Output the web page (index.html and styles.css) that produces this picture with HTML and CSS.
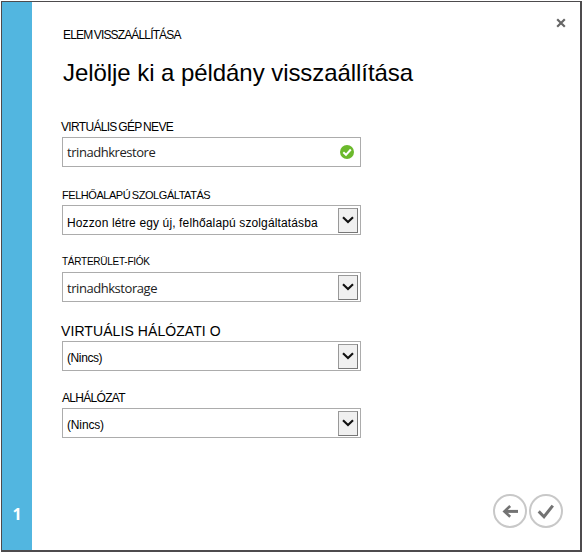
FILE: index.html
```
<!DOCTYPE html>
<html lang="hu">
<head>
<meta charset="utf-8">
<title>Elem visszaállítása</title>
<link rel="stylesheet" href="styles.css">
</head>
<body>
<div class="dialog">
  <aside class="steps"><span class="step">1</span></aside>
  <main class="content">
    <header class="top">
      <div class="eyebrow">ELEM VISSZAÁLLÍTÁSA</div>
      <svg class="close" width="10" height="10" viewBox="0 0 10 10"><path d="M1.2 1.3 8.8 8.7M8.8 1.3 1.2 8.7"/></svg>
    </header>
    <h1 class="title">Jelölje ki a példány visszaállítása</h1>
    <form class="form">
      <div class="field name">
        <label class="label"><span>VIRTUÁLIS GÉP NEVE</span></label>
        <div class="box"><span class="value native">trinadhkrestore</span>
          <svg class="valid" width="14" height="14" viewBox="0 0 14 14"><circle cx="7" cy="7" r="7"/><path d="M3.3 7.2 6 9.8 10.8 4.5"/></svg>
        </div>
      </div>
      <div class="field service">
        <label class="label"><span>FELHŐALAPÚ SZOLGÁLTATÁS</span></label>
        <div class="box"><span class="value">Hozzon létre egy új, felhőalapú szolgáltatásba</span>
          <span class="drop"><svg width="12" height="8" viewBox="0 0 12 8"><path d="M1 1.2 6 6 11 1.2"/></svg></span>
        </div>
      </div>
      <div class="field storage">
        <label class="label"><span>TÁRTERÜLET-FIÓK</span></label>
        <div class="box"><span class="value native">trinadhkstorage</span>
          <span class="drop"><svg width="12" height="8" viewBox="0 0 12 8"><path d="M1 1.2 6 6 11 1.2"/></svg></span>
        </div>
      </div>
      <div class="field network">
        <label class="label"><span>VIRTUÁLIS HÁLÓZATI O</span></label>
        <div class="box"><span class="value">(Nincs)</span>
          <span class="drop"><svg width="12" height="8" viewBox="0 0 12 8"><path d="M1 1.2 6 6 11 1.2"/></svg></span>
        </div>
      </div>
      <div class="field subnet">
        <label class="label"><span>ALHÁLÓZAT</span></label>
        <div class="box"><span class="value">(Nincs)</span>
          <span class="drop"><svg width="12" height="8" viewBox="0 0 12 8"><path d="M1 1.2 6 6 11 1.2"/></svg></span>
        </div>
      </div>
    </form>
    <footer class="actions">
      <svg width="34" height="34" viewBox="0 0 34 34"><circle cx="17" cy="17" r="16"/><path d="M25 17.4H12"/><path class="thin" d="M17.2 12 11.4 17.4 17.2 22.8"/></svg>
      <svg width="34" height="34" viewBox="0 0 34 34"><circle cx="17" cy="17" r="16"/><path d="M9.7 17.4 15 22.7 23.8 11.6"/></svg>
    </footer>
  </main>
</div>
</body>
</html>
```
FILE: styles.css
```
* { box-sizing: border-box; }
body {
  margin: 0;
  width: 583px;
  height: 553px;
  padding: 1px;
  background: #fff;
  font-family: "Liberation Sans", Arial, sans-serif;
  color: #000;
}
.dialog {
  display: flex;
  width: 581px;
  height: 551px;
  border: 1px solid #4d4b4d;
  border-right-width: 2px;
  border-bottom-width: 2px;
}
.steps {
  width: 30px;
  background: #52b6e0;
  display: flex;
  align-items: flex-end;
  justify-content: center;
  padding-bottom: 25px;
}
.step {
  color: #fff;
  font: bold 16px/22px "Open Sans", sans-serif;
}
.content {
  flex: 1;
  display: flex;
  flex-direction: column;
  padding: 16px 14px 22px 30px;
}
.top {
  display: flex;
  justify-content: space-between;
  height: 34px;
  padding-left: 1px;
}
.eyebrow {
  font-size: 12px;
  line-height: 34px;
  letter-spacing: -0.85px;
  word-spacing: -1px;
  white-space: nowrap;
}
.close { fill: none; stroke: #666; stroke-width: 2.2; }
.title {
  margin: 6px 0 0 1px;
  font-size: 24px;
  line-height: 30px;
  font-weight: 400;
  letter-spacing: -0.06px;
  white-space: nowrap;
}
.form { width: 299px; margin-top: 29px; }
.field { display: flex; flex-direction: column; height: 67px; }
.field.name { height: 68px; }
.field.storage { height: 69px; }
.label {
  height: 20px;
  font-size: 12px;
  line-height: 20px;
  white-space: nowrap;
}
.box {
  display: flex;
  align-items: center;
  justify-content: space-between;
  height: 30px;
  border: 1px solid #acacac;
  padding: 0 2px 0 4px;
}
.value { font-size: 12px; line-height: 16px; padding-top: 3px; white-space: nowrap; }
.value.native {
  font: 13px/16px "Open Sans", sans-serif;
  letter-spacing: -0.45px;
  color: #222;
  padding: 0;
}
.valid { margin-right: 4px; }
.valid circle { fill: #6bb92c; }
.valid path { fill: none; stroke: #fff; stroke-width: 2; }
.drop {
  width: 20px;
  height: 25px;
  display: flex;
  align-items: center;
  justify-content: center;
  background: #f0f0f0;
  border: 1px solid #999;
  border-right-color: #777;
  border-bottom-color: #777;
}
.drop path { fill: none; stroke: #111; stroke-width: 2.1; }
.name .label { margin-left: -1px; letter-spacing: -0.68px; word-spacing: -1px; }
.service .label { font-size: 11px; letter-spacing: -0.45px; word-spacing: -1px; }
.service .value { letter-spacing: 0.13px; padding-top: 6px; }
.storage .label { font-size: 10px; letter-spacing: -0.25px; }
.storage .value { padding-top: 2px; }
.network .label { margin-left: -1px; font-size: 14px; letter-spacing: 0.08px; }
.network .value { letter-spacing: -0.4px; }
.subnet .label { letter-spacing: -0.7px; }
.subnet .value { letter-spacing: -0.15px; }
.actions {
  display: flex;
  justify-content: flex-end;
  gap: 2px;
  margin: auto 3px 0 0;
}
.actions circle { fill: #fff; stroke: #c8c8c8; stroke-width: 2; }
.actions path { fill: none; stroke: #737373; stroke-width: 3; }
.actions .thin { stroke-width: 2.6; }
```
